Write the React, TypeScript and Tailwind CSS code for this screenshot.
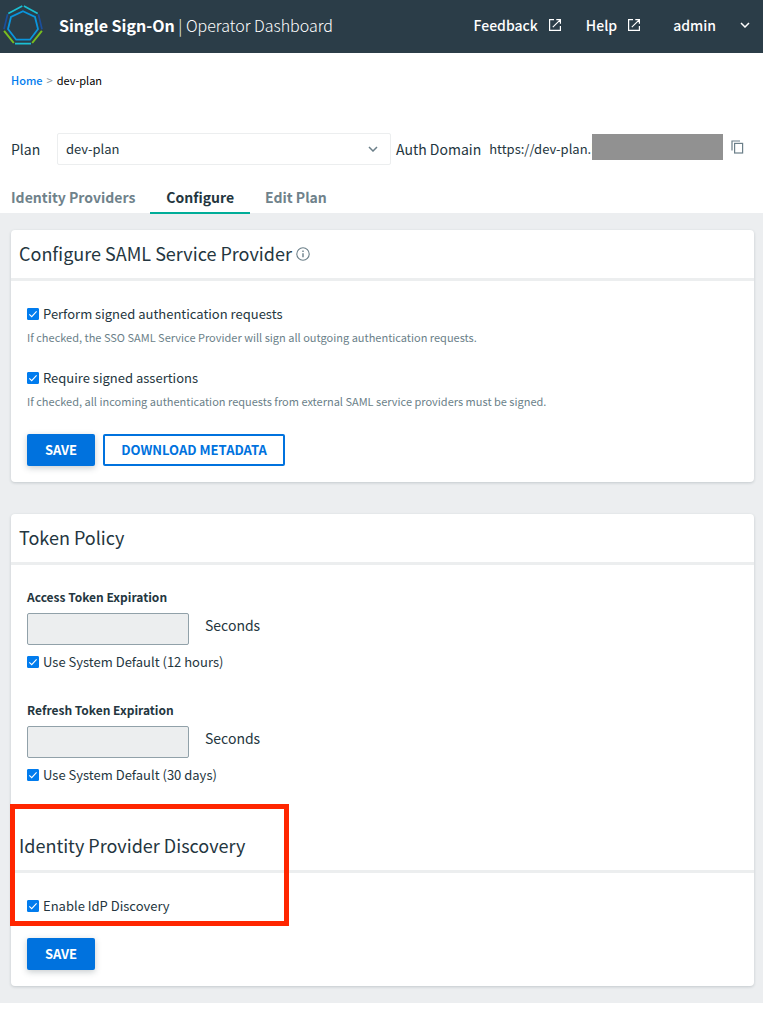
import { useState, type ReactNode } from 'react';

function Logo() {
  return (
    <svg viewBox="0 0 50 54" className="h-[54px] w-[50px] shrink-0" fill="none" strokeWidth="1.7" aria-hidden="true">
      <path d="M23 11.3 35 17 38 29 30 39.7H16.2L8 29 11 17Z" stroke="#0a95dd" strokeWidth="1.8" />
      <path d="M8.3 13.4 22.3 6.1M23.9 6.1 37.7 13.4M15 43.6H31" stroke="#1bbfd3" />
      <path d="M7.6 14.2 4 29.2M38.4 14.2 42 29.2" stroke="#1b4f9c" />
      <path d="M4.1 30.8 13.8 43M41.9 30.8 32.2 43" stroke="#78be20" strokeWidth="2" />
    </svg>
  );
}

function ExternalIcon() {
  return (
    <svg viewBox="0 0 14 14" className="size-[14px]" fill="none" stroke="currentColor" strokeWidth="1.2" aria-hidden="true">
      <path d="M6 1.6H1.6V12.4H12.4V8M8.3 1.6H12.4V5.7M12.2 1.8 4.8 9.2" />
    </svg>
  );
}

function Chevron() {
  return (
    <svg viewBox="0 0 10 6" className="h-[6px] w-[10px] shrink-0" fill="none" stroke="currentColor" strokeWidth="1.5" aria-hidden="true">
      <path d="M1 1 5 5 9 1" />
    </svg>
  );
}

function InfoIcon() {
  return (
    <svg viewBox="0 0 14 14" className="size-[14px]" fill="none" stroke="currentColor" strokeWidth="1.1" aria-hidden="true">
      <circle cx="7" cy="7" r="6.2" />
      <path d="M7 3.6V5M7 6.2V10.2" strokeWidth="1.4" />
    </svg>
  );
}

function CopyIcon() {
  return (
    <svg viewBox="0 0 13 14" className="h-[14px] w-[13px]" fill="none" stroke="currentColor" strokeWidth="1.2" aria-hidden="true">
      <path d="M1 10.5V1H9" />
      <rect x="3.6" y="3.4" width="8" height="9.6" />
    </svg>
  );
}

function CheckField({ id, label }: { id: string; label: string }) {
  const [checked, setChecked] = useState(true);
  return (
    <div className="flex h-5 items-center gap-1">
      <span className="relative flex size-3">
        <input
          id={id}
          type="checkbox"
          checked={checked}
          onChange={(e) => setChecked(e.target.checked)}
          className="size-3 appearance-none rounded-[1px] border border-[#798893] bg-white checked:border-[#017cee] checked:bg-[#017cee]"
        />
        {checked && (
          <svg viewBox="0 0 12 12" className="pointer-events-none absolute inset-0 size-3" fill="none" stroke="#fff" strokeWidth="1.1" aria-hidden="true">
            <path d="M2.3 6.4 4.7 8.7 9.6 3.3" />
          </svg>
        )}
      </span>
      <label htmlFor={id} className="text-[13px] leading-5">{label}</label>
    </div>
  );
}

function SaveButton() {
  return (
    <button type="submit" className="h-8 w-[68px] rounded-xs bg-[#0072de] text-[13px] font-bold text-white shadow-[0_2px_6px_rgba(36,54,64,0.25)]">
      SAVE
    </button>
  );
}

function CardHeading({ children }: { children: ReactNode }) {
  return (
    <h2 className="flex h-[51px] items-center gap-1 border-b-3 border-[#eceeef] px-2 pb-0.5 text-lg">
      {children}
    </h2>
  );
}

function Expiration({ id, label, fallback }: { id: string; label: string; fallback: string }) {
  return (
    <div>
      <label htmlFor={id} className="block text-[12px] leading-5 font-bold">{label}</label>
      <div className="mt-1.5 flex gap-4">
        <input id={id} type="text" disabled className="h-8 w-[162px] rounded-xs border border-[#91a1a9] bg-[#eceeef] px-2 text-[13px]" />
        <span className="text-[14px] leading-6">Seconds</span>
      </div>
      <div className="mt-[7px]">
        <CheckField id={id + '-default'} label={fallback} />
      </div>
    </div>
  );
}

const card = 'rounded bg-white shadow-[0_1px_3px_rgba(36,54,64,0.2)]';

export default function App() {
  return (
    <div className="min-h-screen bg-white font-['Noto_Sans_CJK_SC','Source_Sans_Pro',sans-serif] text-[#243640]">
      <header className="flex h-[53px] items-center bg-[#2b3d48] text-white">
        <Logo />
        <h1 className="ml-[9px] pb-[3px] text-base font-light whitespace-nowrap">
          <span className="font-bold">Single Sign-On</span> | Operator Dashboard
        </h1>
        <nav className="ml-auto flex items-center pr-[13px] pb-[3px] text-[14px] font-medium">
          <a href="#feedback" className="flex items-center gap-2.5">Feedback <ExternalIcon /></a>
          <a href="#help" className="ml-6 flex items-center gap-2.5">Help <ExternalIcon /></a>
          <button type="button" className="ml-8 flex items-center gap-6">admin <Chevron /></button>
        </nav>
      </header>

      <nav aria-label="Breadcrumb" className="mt-[17px] flex gap-1 pl-[11px] text-[11px] leading-5 text-black">
        <a href="#home" className="font-medium text-[#017cee]">Home</a>
        <span className="font-medium text-[#8f9ba3]">&gt;</span>
        <span>dev-plan</span>
      </nav>

      <div className="mt-[43px] flex h-8 items-center pl-[11px] text-[14px]">
        <label htmlFor="plan" className="w-[46px] shrink-0">Plan</label>
        <span className="relative flex w-[334px] items-center">
          <select id="plan" className="h-8 w-full appearance-none rounded-xs border border-[#eceeef] bg-white px-2 text-[13px]">
            <option>dev-plan</option>
          </select>
          <span className="pointer-events-none absolute right-[13px] text-[#6b7f89]"><Chevron /></span>
        </span>
        <span className="ml-[5px] whitespace-nowrap">Auth Domain</span>
        <span className="ml-2 text-[13px] whitespace-nowrap">https://dev-plan.l</span>
        <span className="relative -ml-[3px] mb-1 h-[26px] w-[131px] shrink-0 bg-[#919191]" />
        <button type="button" aria-label="Copy auth domain" className="mb-1 ml-2 text-[#6b7f89]"><CopyIcon /></button>
      </div>

      <nav aria-label="Plan sections" className="mt-4 flex h-8 pl-[11px] text-[14px] leading-8 font-bold text-[#6f828b]">
        <a href="#providers" className="mr-[15px]">Identity Providers</a>
        <a href="#configure" className="relative z-10 h-[33px] border-b-2 border-[#00ad98] px-4 text-[#243640]">Configure</a>
        <a href="#edit" className="ml-[15px]">Edit Plan</a>
      </nav>

      <main className="flex flex-col gap-8 bg-[#eceef0] pt-[17px] pr-[9px] pb-[17px] pl-[11px]">
        <form className={card} onSubmit={(e) => e.preventDefault()}>
          <CardHeading>
            Configure SAML Service Provider
            <span className="pt-0.5 text-[#6b7f89]"><InfoIcon /></span>
          </CardHeading>
          <div className="px-4 pt-[23px] pb-4">
            <CheckField id="signed-requests" label="Perform signed authentication requests" />
            <p className="mt-[3px] text-[11px] leading-5 text-[#6b7f89]">
              If checked, the SSO SAML Service Provider will sign all outgoing authentication requests.
            </p>
            <div className="mt-[21px]">
              <CheckField id="signed-assertions" label="Require signed assertions" />
            </div>
            <p className="mt-[3px] text-[11px] leading-5 text-[#6b7f89]">
              If checked, all incoming authentication requests from external SAML service providers must be signed.
            </p>
            <div className="mt-[23px] flex gap-2">
              <SaveButton />
              <button type="button" className="h-8 w-[182px] rounded-xs border-2 border-[#0072de] text-[13px] font-bold text-[#0072de]">
                DOWNLOAD METADATA
              </button>
            </div>
          </div>
        </form>

        <form className={card} onSubmit={(e) => e.preventDefault()}>
          <CardHeading>Token Policy</CardHeading>
          <div className="flex flex-col gap-7 px-4 pt-[22px]">
            <Expiration id="access-token" label="Access Token Expiration" fallback="Use System Default (12 hours)" />
            <Expiration id="refresh-token" label="Refresh Token Expiration" fallback="Use System Default (30 days)" />
          </div>
          <section className="relative mt-[37px]">
            <CardHeading>Identity Provider Discovery</CardHeading>
            <div className="px-4 pt-[23px]">
              <CheckField id="idp-discovery" label="Enable IdP Discovery" />
            </div>
            <div className="pointer-events-none absolute -top-[18px] -bottom-[10px] -left-px w-[279px] border-5 border-[#ff2600]" />
          </section>
          <div className="px-4 pt-[22px] pb-4">
            <SaveButton />
          </div>
        </form>
      </main>
    </div>
  );
}
